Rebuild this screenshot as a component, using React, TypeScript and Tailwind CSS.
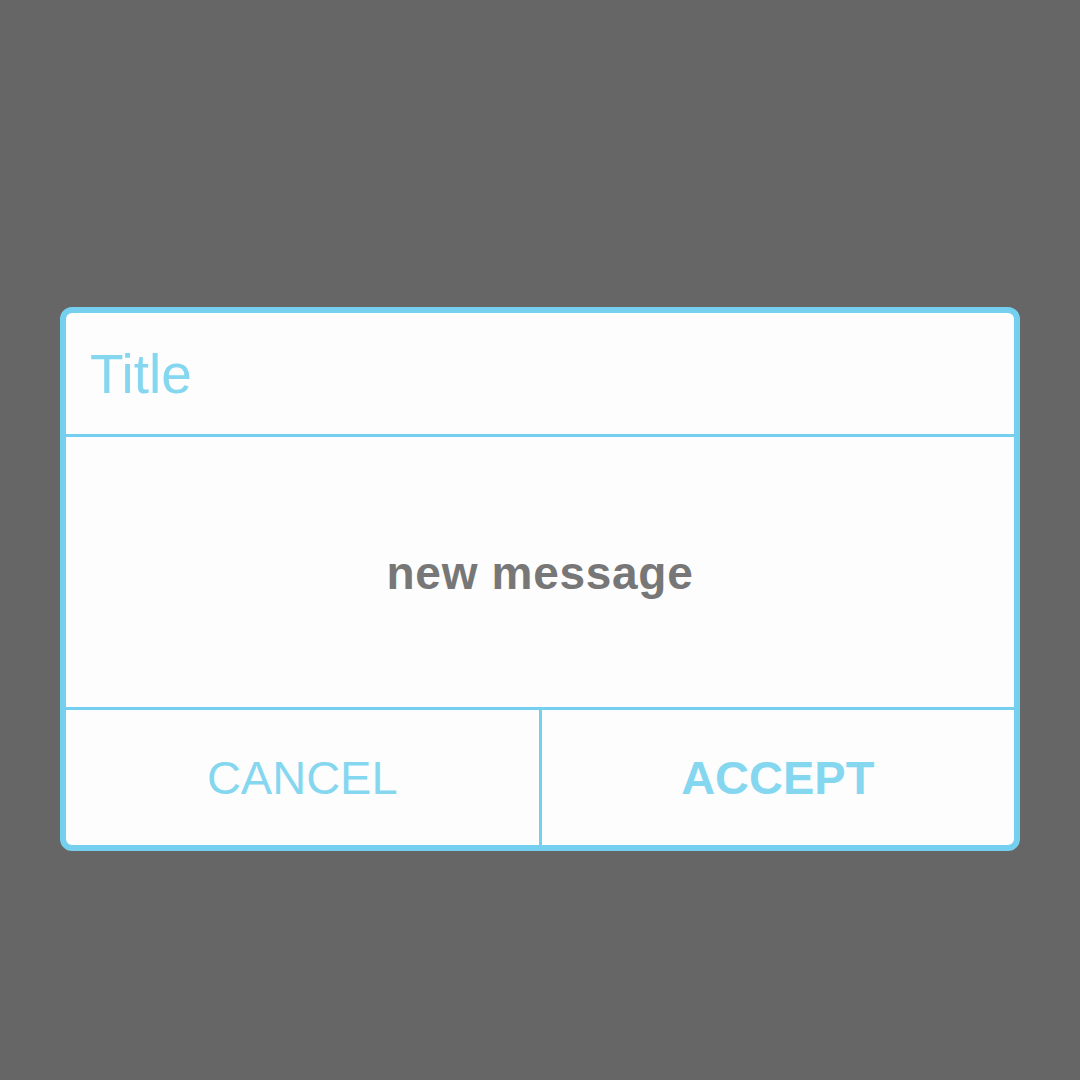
export default function App() {
  return (
    <div className="w-[1080px] h-[1080px] bg-[#666666] flex items-center justify-center" style={{ fontFamily: '"Liberation Sans", Arial, sans-serif' }}>
      <div className="w-[960px] h-[544px] mt-[78px] border-[6px] border-[#74d0ee] rounded-[12px] bg-[#fdfdfd] flex flex-col overflow-hidden">
        <div className="h-[121px] flex items-center pl-[24px] border-b-[3px] border-[#74d0ee] box-content">
          <span className="text-[55px] leading-none text-[#85d7f0] pt-[2px]">Title</span>
        </div>
        <div className="h-[270px] flex items-center justify-center">
          <span className="text-[46px] font-bold leading-none tracking-[0.7px] text-[#777777] pt-[2px]">new message</span>
        </div>
        <div className="flex-1 flex border-t-[3px] border-[#74d0ee]">
          <button className="flex-1 flex items-center justify-center text-[47px] leading-none text-[#85d7f0] border-r-[3px] border-[#74d0ee]">
            CANCEL
          </button>
          <button className="flex-1 flex items-center justify-center text-[47px] font-bold leading-none text-[#85d7f0]">
            ACCEPT
          </button>
        </div>
      </div>
    </div>
  );
}
